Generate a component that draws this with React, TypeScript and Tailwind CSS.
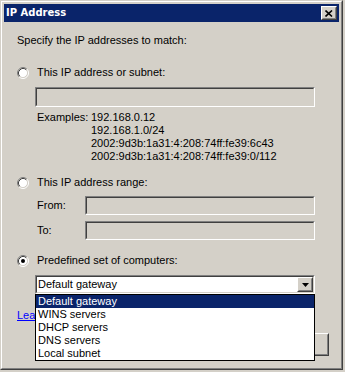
import type { ReactNode } from 'react';

const FONT = "font-['Liberation_Sans',Arial,sans-serif]";

function Radio({ checked }: { checked?: boolean }) {
  return (
    <svg width="12" height="12" viewBox="0 0 12 12" className="shrink-0">
      <circle cx="6" cy="6" r="4.5" fill="#ffffff" />
      <path d="M2.11 9.89 A5.5 5.5 0 0 1 9.89 2.11" fill="none" stroke="#808080" strokeWidth="1" />
      <path d="M9.89 2.11 A5.5 5.5 0 0 1 2.11 9.89" fill="none" stroke="#ffffff" strokeWidth="1" />
      <path d="M2.82 9.18 A4.5 4.5 0 0 1 9.18 2.82" fill="none" stroke="#404040" strokeWidth="1" />
      <path d="M9.18 2.82 A4.5 4.5 0 0 1 2.82 9.18" fill="none" stroke="#d4d0c8" strokeWidth="1" />
      {checked && <circle cx="6" cy="6" r="2" fill="#000000" />}
    </svg>
  );
}

function Sunken({ className, children }: { className: string; children?: ReactNode }) {
  return (
    <div className={`border border-t-[#808080] border-l-[#808080] border-b-white border-r-white ${className}`}>
      <div className="h-full border border-t-[#404040] border-l-[#404040] border-b-[#d4d0c8] border-r-[#d4d0c8]">
        {children}
      </div>
    </div>
  );
}

function RadioRow({ label, checked }: { label: string; checked?: boolean }) {
  return (
    <div className="flex items-center h-[13px] gap-[8px]">
      <Radio checked={checked} />
      <span className="leading-[13px]">{label}</span>
    </div>
  );
}

function Raised({ className, children }: { className: string; children?: ReactNode }) {
  return (
    <div className={`border border-t-white border-l-white border-b-[#404040] border-r-[#404040] ${className}`}>
      <div className="h-full border border-t-[#d4d0c8] border-l-[#d4d0c8] border-b-[#808080] border-r-[#808080] bg-[#d4d0c8] flex items-center justify-center">
        {children}
      </div>
    </div>
  );
}

const options = ['Default gateway', 'WINS servers', 'DHCP servers', 'DNS servers', 'Local subnet'];

export default function App() {
  return (
    <div className={`w-[345px] h-[372px] bg-[#d4d0c8] overflow-hidden text-[11px] text-black ${FONT}`}>
      {/* window frame */}
      <div className="w-[343px] h-[370px] border border-t-[#d4d0c8] border-l-[#d4d0c8] border-b-[#404040] border-r-[#404040]">
        <div className="h-full border border-t-white border-l-white border-b-[#808080] border-r-[#808080] p-[2px] flex flex-col">
          {/* title bar */}
          <div className="h-[18px] bg-[#0a246a] flex items-center justify-between pl-[2px] pr-[2px] shrink-0">
            <span className="text-white font-bold text-[10px] font-['DejaVu_Sans',Tahoma,sans-serif] leading-[18px]">
              IP Address
            </span>
            <Raised className="w-[16px] h-[14px]">
              <svg width="8" height="7" viewBox="0 0 8 7">
                <path d="M0.5 0.5 L7 6.5 M7 0.5 L0.5 6.5" stroke="#000" strokeWidth="1.6" />
              </svg>
            </Raised>
          </div>

          {/* body */}
          <div className="pl-[13px] flex flex-col">
            <div className="mt-[12px] h-[13px] leading-[13px]">Specify the IP addresses to match:</div>

            <div className="mt-[19px]">
              <RadioRow label="This IP address or subnet:" />
            </div>
            <Sunken className="mt-[8px] ml-[18px] w-[280px] h-[20px] bg-[#d4d0c8]" />

            <div className="mt-[4px] ml-[20px] flex leading-[13px]">
              <span className="w-[54px]">Examples:</span>
              <div className="flex flex-col">
                <span>192.168.0.12</span>
                <span>192.168.1.0/24</span>
                <span>2002:9d3b:1a31:4:208:74ff:fe39:6c43</span>
                <span>2002:9d3b:1a31:4:208:74ff:fe39:0/112</span>
              </div>
            </div>

            <div className="mt-[13px]">
              <RadioRow label="This IP address range:" />
            </div>
            <div className="mt-[7px] ml-[20px] flex items-center">
              <span className="w-[48px]">From:</span>
              <Sunken className="w-[230px] h-[19px] bg-[#d4d0c8]" />
            </div>
            <div className="mt-[6px] ml-[20px] flex items-center">
              <span className="w-[48px]">To:</span>
              <Sunken className="w-[230px] h-[19px] bg-[#d4d0c8]" />
            </div>

            <div className="mt-[14px]">
              <RadioRow label="Predefined set of computers:" checked />
            </div>

            {/* select with open list */}
            <div className="mt-[8px] ml-[18px] w-[280px] relative">
              <Sunken className="h-[19px] bg-white">
                <div className="flex items-center h-full pl-[1px]">
                  <span className="flex-1 leading-[13px]">Default gateway</span>
                  <Raised className="w-[16px] h-[15px]">
                    <svg width="7" height="4" viewBox="0 0 7 4">
                      <path d="M0 0 H7 L3.5 4 Z" fill="#000" />
                    </svg>
                  </Raised>
                </div>
              </Sunken>
              <div className="absolute left-0 top-full w-[280px] border border-black bg-white z-10">
                {options.map((o, i) => (
                  <div
                    key={o}
                    className={`h-[13px] leading-[13px] px-[2px] ${i === 0 ? 'bg-[#0a246a] text-white' : ''}`}
                  >
                    {o}
                  </div>
                ))}
              </div>
            </div>

            {/* link, its tail lies under the open list */}
            <div className="mt-[15px] h-[13px] w-[18px] overflow-hidden leading-[13px] whitespace-nowrap">
              <span className="text-[#0000ff] underline">Learn</span>
            </div>

            <div className="mt-[11px] flex justify-end gap-[8px] pr-[10px]">
              <Raised className="w-[75px] h-[23px]">OK</Raised>
              <Raised className="w-[75px] h-[23px]">Cancel</Raised>
            </div>
          </div>
        </div>
      </div>
    </div>
  );
}
